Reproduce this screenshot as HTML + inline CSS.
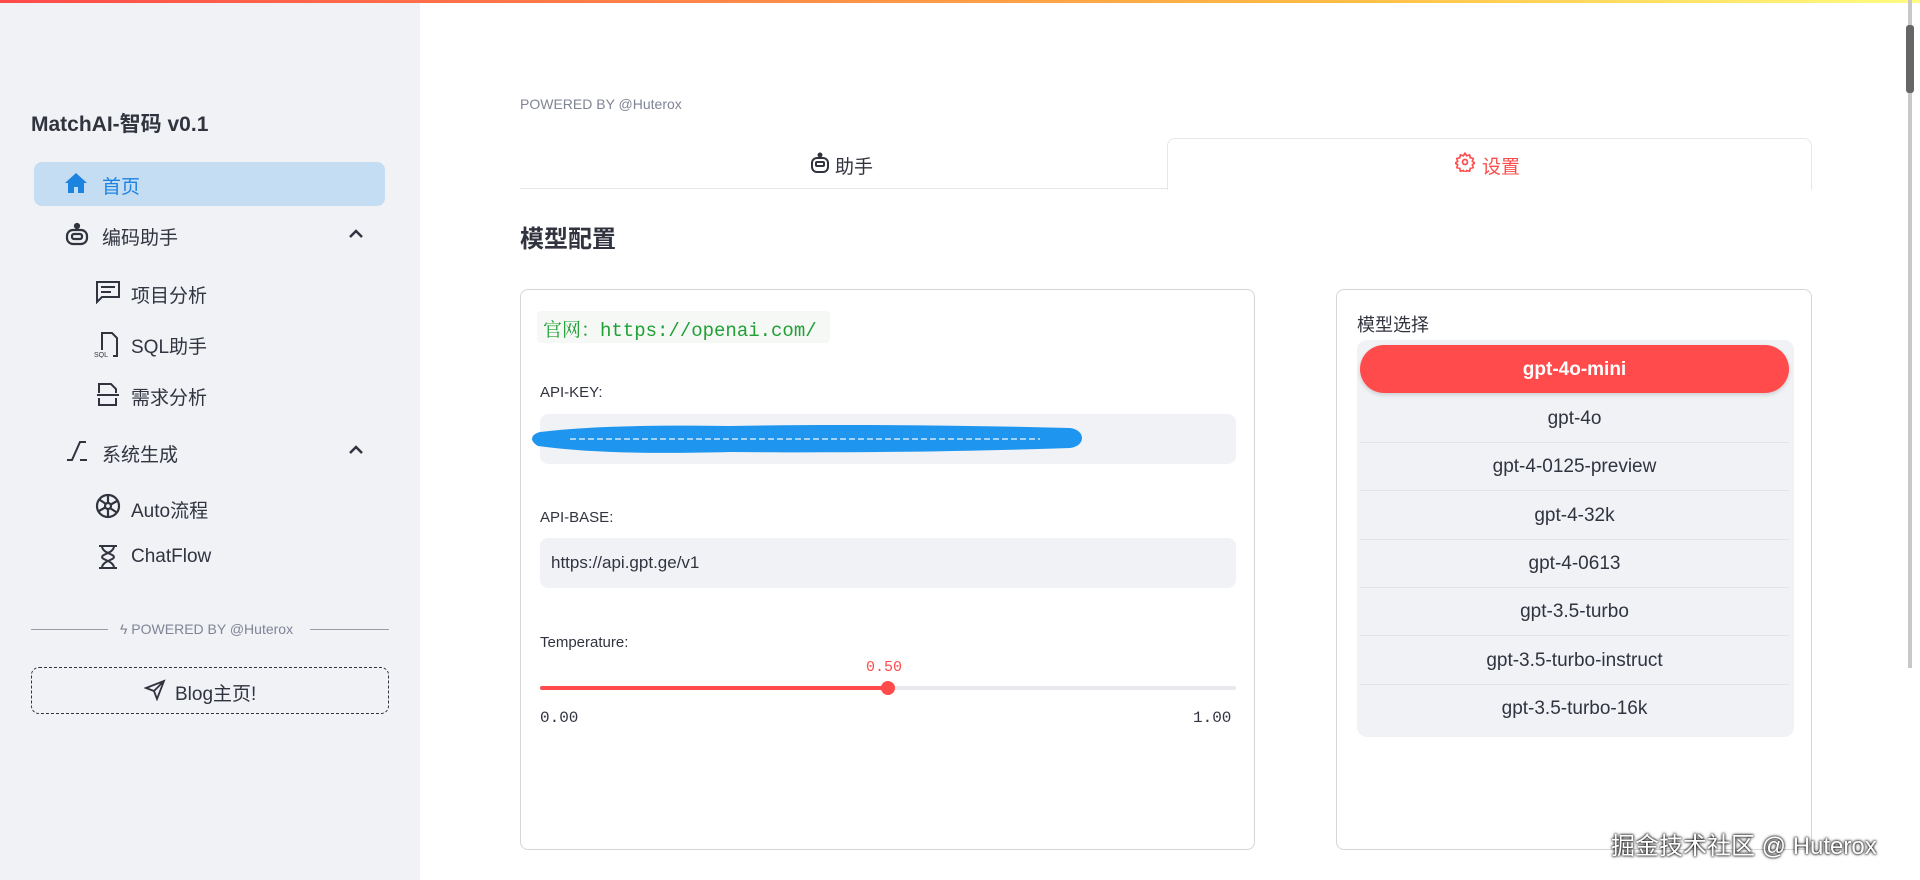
<!DOCTYPE html>
<html><head><meta charset="utf-8"><style>
*{box-sizing:border-box;margin:0;padding:0}
body{width:1920px;height:880px;overflow:hidden;background:#fff;font-family:"Liberation Sans","Noto Sans CJK SC",sans-serif;color:#31333f;position:relative}
.topbar{position:absolute;left:0;top:0;width:1920px;height:3px;background:linear-gradient(90deg,#ff4b4b,#ffbd45 70%,#fffd80)}
.side{position:absolute;left:0;top:3px;width:420px;height:877px;background:#f0f2f6}
.abs{position:absolute;white-space:nowrap}
.title{left:31px;top:108px;font-size:21px;font-weight:bold;color:#31333f}
.home{left:34px;top:162px;width:351px;height:44px;border-radius:8px;background:#c5ddf3}
.nav{font-size:19px;color:#31333f}
.muted{color:#808495}
.card{position:absolute;border:1px solid #d6d6d9;border-radius:8px;background:#fff}
.inp{position:absolute;left:540px;width:696px;height:50px;background:#f0f2f6;border-radius:8px}
.lbl{font-size:15px;color:#31333f}
.item{position:absolute;left:1360px;width:429px;text-align:center;font-size:19px;color:#31333f;border-bottom:1px solid #e3e4e8;height:48px;line-height:48px}
</style></head><body>
<div class="topbar"></div>
<div class="side"></div>
<div class="abs title">MatchAI-智码 v0.1</div>
<div class="abs home"></div>
<svg class="abs" style="left:64px;top:172px" width="24" height="22" viewBox="0 0 24 22"><path d="M12 1L1 11h3v10h6v-6h4v6h6V11h3z" fill="#1c83e1"/></svg>
<div class="abs nav" style="left:102px;top:172px;color:#1c83e1">首页</div>
<svg class="abs" style="left:64px;top:222px" width="26" height="26" viewBox="0 0 26 26" fill="none" stroke="#31333f" stroke-width="2.2"><circle cx="13" cy="4" r="2" fill="#31333f"/><rect x="3" y="8" width="20" height="14" rx="6"/><rect x="8" y="12" width="10" height="5" rx="2"/></svg>
<div class="abs nav" style="left:102px;top:223px">编码助手</div>
<svg class="abs" style="left:348px;top:228px" width="16" height="12" viewBox="0 0 16 12" fill="none" stroke="#31333f" stroke-width="2.5"><path d="M2 9l6-6 6 6"/></svg>
<svg class="abs" style="left:95px;top:280px" width="26" height="24" viewBox="0 0 26 24" fill="none" stroke="#31333f" stroke-width="2"><path d="M2 2h22v15H7l-5 5z"/><path d="M6 7h14M6 12h10"/></svg>
<div class="abs nav" style="left:131px;top:281px">项目分析</div>
<svg class="abs" style="left:94px;top:330px" width="26" height="28" viewBox="0 0 26 28" fill="none" stroke="#31333f" stroke-width="2"><path d="M8 20V3h10l5 5v18h-4"/><text x="0" y="27" font-size="7" fill="#31333f" stroke="none" font-family="Liberation Sans">SQL</text></svg>
<div class="abs nav" style="left:131px;top:332px">SQL助手</div>
<svg class="abs" style="left:95px;top:381px" width="26" height="26" viewBox="0 0 26 26" fill="none" stroke="#31333f" stroke-width="2"><path d="M4 12V3h12l5 5v4M2 14h22M4 17v7h17v-7"/></svg>
<div class="abs nav" style="left:131px;top:383px">需求分析</div>
<svg class="abs" style="left:66px;top:440px" width="24" height="22" viewBox="0 0 24 22" fill="none" stroke="#31333f" stroke-width="2"><path d="M1 20h5l8-18h6M14 20h7"/></svg>
<div class="abs nav" style="left:102px;top:440px">系统生成</div>
<svg class="abs" style="left:348px;top:444px" width="16" height="12" viewBox="0 0 16 12" fill="none" stroke="#31333f" stroke-width="2.5"><path d="M2 9l6-6 6 6"/></svg>
<svg class="abs" style="left:95px;top:493px" width="26" height="26" viewBox="0 0 26 26" fill="none" stroke="#31333f" stroke-width="2.2"><circle cx="13" cy="13" r="11"/><circle cx="13" cy="13" r="3"/><path d="M13 2v8M22 8l-7 4M21 19l-6-4M13 24v-8M4 18l7-4M5 7l6 4"/></svg>
<div class="abs nav" style="left:131px;top:496px">Auto流程</div>
<svg class="abs" style="left:97px;top:544px" width="22" height="26" viewBox="0 0 22 26" fill="none" stroke="#31333f" stroke-width="2"><path d="M2 2h18M2 24h18M5 2c0 7 12 8 12 11s-12 4-12 11M17 2c0 7-12 8-12 11s12 4 12 11"/></svg>
<div class="abs nav" style="left:131px;top:546px">ChatFlow</div>
<div class="abs" style="left:31px;top:629px;width:77px;height:1px;background:#9a9ca6"></div>
<div class="abs" style="left:310px;top:629px;width:79px;height:1px;background:#9a9ca6"></div>
<div class="abs muted" style="left:120px;top:621px;font-size:14px">ϟ POWERED BY @Huterox</div>
<div class="abs" style="left:31px;top:667px;width:358px;height:47px;border:1.5px dashed #31333f;border-radius:8px"></div>
<svg class="abs" style="left:144px;top:679px" width="22" height="22" viewBox="0 0 22 22" fill="none" stroke="#31333f" stroke-width="1.8"><path d="M2 9L20 2 13 20 10 12z M10 12l10-10"/></svg>
<div class="abs nav" style="left:175px;top:679px">Blog主页!</div>

<div class="abs muted" style="left:520px;top:96px;font-size:14px">POWERED BY @Huterox</div>
<div class="abs" style="left:520px;top:188px;width:647px;height:1px;background:#e6e6ea"></div>
<div class="abs" style="left:1167px;top:138px;width:645px;height:52px;border:1px solid #e6e6ea;border-bottom:none;border-radius:8px 8px 0 0;background:#fff"></div>
<svg class="abs" style="left:810px;top:152px" width="20" height="22" viewBox="0 0 20 22" fill="none" stroke="#31333f" stroke-width="2"><circle cx="10" cy="3" r="1.5" fill="#31333f"/><rect x="2" y="6" width="16" height="14" rx="5"/><rect x="6" y="10" width="8" height="4" rx="1"/></svg>
<div class="abs" style="left:835px;top:152px;font-size:19px">助手</div>
<svg class="abs" style="left:1455px;top:152px" width="20" height="20" viewBox="0 0 24 24" fill="none" stroke="#ff4b4b" stroke-width="2"><circle cx="12" cy="12" r="3"/><path d="M12 1.5l2 3 3.5-1 .8 3.5 3.5.8-1 3.5 3 2-3 2 1 3.5-3.5.8-.8 3.5-3.5-1-2 3-2-3-3.5 1-.8-3.5-3.5-.8 1-3.5-3-2 3-2-1-3.5 3.5-.8.8-3.5 3.5 1z"/></svg>
<div class="abs" style="left:1482px;top:152px;font-size:19px;color:#ff4b4b">设置</div>
<div class="abs" style="left:520px;top:219px;font-size:24px;font-weight:bold">模型配置</div>

<div class="card" style="left:520px;top:289px;width:735px;height:561px"></div>
<div class="abs" style="left:537px;top:311px;width:293px;height:32px;background:#f5f8f5;border-radius:4px"></div>
<div class="abs" style="left:543px;top:315px;font-size:19px;color:#21a035;font-family:'Liberation Mono','Noto Serif CJK SC',monospace">官网：https://openai.com/</div>
<div class="abs lbl" style="left:540px;top:384px">API-KEY:</div>
<div class="inp" style="top:414px"></div>
<svg class="abs" style="left:530px;top:420px" width="560" height="40" viewBox="0 0 560 40"><path d="M10 12C60 6 120 5 200 6 300 4 420 5 540 8 556 10 556 26 540 28 420 32 300 33 200 32 120 34 60 33 8 26-2 20 2 14 10 12z" fill="#1e96ef"/><path d="M40 19h470" stroke="#cfe6f8" stroke-width="1.5" stroke-dasharray="6 3"/></svg>
<div class="abs lbl" style="left:540px;top:509px">API-BASE:</div>
<div class="inp" style="top:538px"></div>
<div class="abs" style="left:551px;top:553px;font-size:17px">https://api.gpt.ge/v1</div>
<div class="abs lbl" style="left:540px;top:634px">Temperature:</div>
<div class="abs" style="left:866px;top:659px;font-size:15px;color:#ff4b4b;font-family:'Liberation Mono',monospace">0.50</div>
<div class="abs" style="left:540px;top:686px;width:696px;height:4px;border-radius:2px;background:#e8e9ed"></div>
<div class="abs" style="left:540px;top:686px;width:348px;height:4px;border-radius:2px;background:#ff4b4b"></div>
<div class="abs" style="left:881px;top:681px;width:14px;height:14px;border-radius:50%;background:#ff4b4b"></div>
<div class="abs" style="left:540px;top:709px;font-size:16px;color:#31333f;font-family:'Liberation Mono',monospace">0.00</div>
<div class="abs" style="left:1193px;top:709px;font-size:16px;color:#31333f;font-family:'Liberation Mono',monospace">1.00</div>

<div class="card" style="left:1336px;top:289px;width:476px;height:561px"></div>
<div class="abs" style="left:1357px;top:311px;font-size:18px">模型选择</div>
<div class="abs" style="left:1357px;top:340px;width:437px;height:397px;background:#f0f2f6;border-radius:10px"></div>
<div class="abs" style="left:1360px;top:345px;width:429px;height:48px;border-radius:24px;background:#ff4b4b;box-shadow:0 2px 4px rgba(0,0,0,.15)"></div>
<div class="abs" style="left:1360px;top:346px;width:429px;line-height:48px;text-align:center;font-size:19px;color:#fff;font-weight:bold">gpt-4o-mini</div>
<div class="item" style="top:395px">gpt-4o</div>
<div class="item" style="top:443px">gpt-4-0125-preview</div>
<div class="item" style="top:492px">gpt-4-32k</div>
<div class="item" style="top:540px">gpt-4-0613</div>
<div class="item" style="top:588px">gpt-3.5-turbo</div>
<div class="item" style="top:637px">gpt-3.5-turbo-instruct</div>
<div class="item" style="top:685px;border-bottom:none">gpt-3.5-turbo-16k</div>

<div class="abs" style="left:1908px;top:0;width:4px;height:668px;background:#c8c8c8"></div>
<div class="abs" style="left:1906px;top:25px;width:8px;height:68px;background:#666;border-radius:3px"></div>
<div class="abs" style="left:1611px;top:826px;font-size:24px;color:#fff;text-shadow:0 0 3px #000,0 0 2px #000">掘金技术社区 @ Huterox</div>
</body></html>
